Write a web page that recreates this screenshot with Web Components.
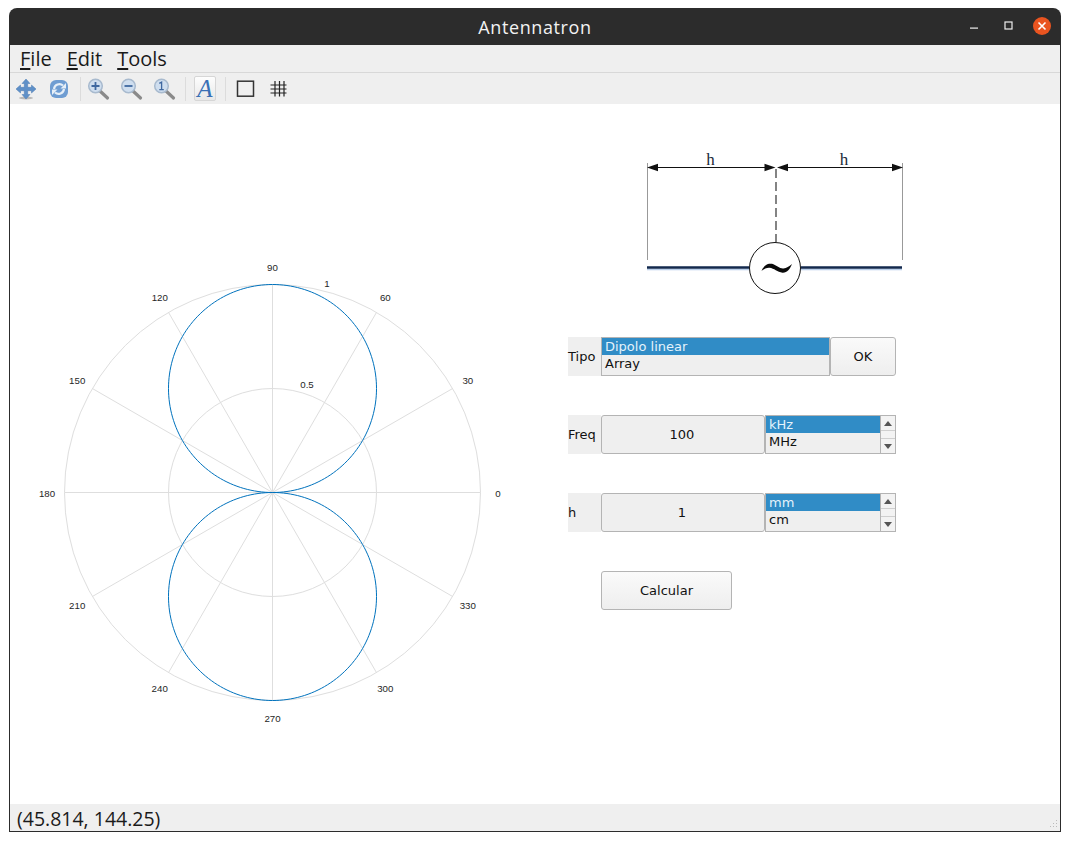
<!DOCTYPE html>
<html><head><meta charset="utf-8">
<style>
html,body{margin:0;background:#fff;height:100%}
body{padding:8px 9px 0 9px;box-sizing:border-box;overflow:hidden}
</style></head><body>
<app-window title-text="Antennatron">
  <menu-bar slot="menu"></menu-bar>
  <tool-bar slot="tools"></tool-bar>
  <polar-plot slot="plot"></polar-plot>
  <dipole-diagram slot="diagram"></dipole-diagram>
  <form-panel slot="form"></form-panel>
  <status-bar slot="status">(45.814, 144.25)</status-bar>
</app-window>
<script>
function def(name, html, setup){
  customElements.define(name, class extends HTMLElement{
    constructor(){super();const r=this.attachShadow({mode:'open'});r.innerHTML=typeof html==='function'?html(this):html;}
    connectedCallback(){ if(setup) setup(this); }
  });
}
def('app-window',`<style>
:host{display:flex;flex-direction:column;width:1052px;height:824px;box-sizing:border-box;background:#fff}
.title{height:37px;background:#2c2c2c;border-radius:8px 8px 0 0;display:flex;align-items:center;justify-content:center;color:#f2f2f2;font:18px "Open Sans",sans-serif;letter-spacing:.6px;position:relative;flex:none}
.ctl{position:absolute;right:0;top:0;height:37px;display:flex;align-items:center}
.frame{flex:1;display:flex;flex-direction:column;border:solid #2c2c2c;border-width:0 1px 1px 1px;min-height:0}
.main{flex:1;display:flex;min-height:0;background:#fff}
.right{display:flex;flex-direction:column}
</style>
<div class="title"><span id="t">Antennatron</span>
<div class="ctl"><svg width="100" height="37" viewBox="0 0 100 37">
<rect x="9" y="19.500" width="8" height="1.200" fill="#eee"/>
<rect x="44" y="14" width="7" height="7" fill="none" stroke="#eee" stroke-width="1.200"/>
<circle cx="81" cy="18" r="9" fill="#e95420"/>
<path d="M77.500 14.500l7 7M84.500 14.500l-7 7" stroke="#fff" stroke-width="1.600"/>
</svg></div></div>
<div class="frame">
<slot name="menu"></slot><slot name="tools"></slot>
<div class="main"><slot name="plot"></slot><div class="right"><slot name="diagram"></slot><slot name="form"></slot></div></div>
<slot name="status"></slot>
</div>`);

def('menu-bar',`<style>
:host{display:flex;height:28px;box-sizing:border-box;background:#efefef;border-bottom:1px solid #d8d8d8;padding-left:10px;font:20px "Open Sans",sans-serif;color:#1a1a1a;gap:15px;align-items:center;flex:none}
u{text-underline-offset:2px;text-decoration-thickness:1.5px}
</style><span><u>F</u>ile</span><span><u>E</u>dit</span><span><u>T</u>ools</span>`);

def('tool-bar',`<style>
:host{display:flex;height:31px;box-sizing:border-box;background:#efefef;align-items:center;padding-left:4px;flex:none}
svg{display:block;flex:none}
.b{width:24px;height:24px;display:flex;align-items:center;justify-content:center;margin-right:9px}
.s{width:1px;height:24px;background:#dcdcdc}
.a{width:22px;height:25px;box-sizing:border-box;background:linear-gradient(#fdfdfd,#e8e8e8);border:1px solid #d6d6d6;border-radius:2px;display:flex;align-items:center;justify-content:center;margin:0 9px 0 8px;font:italic 25px "Liberation Serif",serif;color:#3a70b5;line-height:1}
</style>
<div class="b"><svg width="22" height="22" viewBox="0 0 22 22"><ellipse cx="11" cy="20" rx="7" ry="1.500" fill="#777" opacity=".45"/><path d="M11 1l4 4.500h-2.300v3.800h3.800V7l4.500 4-4.500 4v-2.300h-3.800v3.800H15L11 21l-4-4.500h2.300v-3.800H5.500V15L1 11l4.500-4v2.300h3.800V5.500H7z" fill="#5f90c8" stroke="#4a7ab3" stroke-width=".5"/></svg></div>
<div class="b"><svg width="22" height="22" viewBox="0 0 22 22"><rect x="2" y="2" width="18" height="18" rx="6" fill="#6f9dd2"/><path d="M6 11a5.500 5.500 0 0 1 9-3.500" fill="none" stroke="#e6eff8" stroke-width="2.200"/><path d="M12.500 10.500h5.500V5z" fill="#e6eff8"/><path d="M16 11a5.500 5.500 0 0 1-9 3.500" fill="none" stroke="#e6eff8" stroke-width="2.200"/><path d="M9.500 11.500H4V17z" fill="#e6eff8"/></svg></div>
<div class="s" style="margin-right:6px"></div>
<div class="b"><svg width="24" height="24" viewBox="0 0 24 24"><path d="M13 14l7.500 7" stroke="#8a8a8a" stroke-width="3.200" stroke-linecap="round"/><circle cx="8.500" cy="9" r="6.800" fill="#cfdeef" stroke="#a8bace" stroke-width="1.500"/><path d="M4.500 9h8M8.500 5v8" stroke="#3f68a0" stroke-width="1.800"/></svg></div>
<div class="b"><svg width="24" height="24" viewBox="0 0 24 24"><path d="M13 14l7.500 7" stroke="#8a8a8a" stroke-width="3.200" stroke-linecap="round"/><circle cx="8.500" cy="9" r="6.800" fill="#cfdeef" stroke="#a8bace" stroke-width="1.500"/><path d="M4.500 9h8" stroke="#3f68a0" stroke-width="1.800"/></svg></div>
<div class="b"><svg width="24" height="24" viewBox="0 0 24 24"><path d="M13 14l7.500 7" stroke="#8a8a8a" stroke-width="3.200" stroke-linecap="round"/><circle cx="8.500" cy="9" r="6.800" fill="#cfdeef" stroke="#a8bace" stroke-width="1.500"/><path d="M6.300 6.300l2.300-1.200v7.400M6.300 12.700h4.500" stroke="#3f68a0" stroke-width="1.300" fill="none"/></svg></div>
<div class="s" style="margin-left:-1px"></div>
<div class="a">A</div>
<div class="s" style="margin-right:7px"></div>
<div class="b"><svg width="20" height="20" viewBox="0 0 20 20"><rect x="2.500" y="2.200" width="16" height="15" fill="none" stroke="#333" stroke-width="1.500"/></svg></div>
<div class="b"><svg width="18" height="18" viewBox="0 0 18 18"><path d="M6 1v15.500M10.500 1v15.500M15 1v15.500M1.500 5h16M1.500 9h16M1.500 13h16" stroke="#222" stroke-width="1.200"/></svg></div>
`);

def('polar-plot',()=>{
  const cx=262.5,cy=388.5,R=208,L=225.5;
  let g='',t='';
  for(const a of [0,30,60,90,120,150]){
    const r=a*Math.PI/180,dx=R*Math.cos(r),dy=R*Math.sin(r);
    g+=`<line x1="${cx-dx}" y1="${cy+dy}" x2="${cx+dx}" y2="${cy-dy}"/>`;
  }
  for(let a=0;a<360;a+=30){
    const r=a*Math.PI/180;
    const x=cx+L*Math.cos(r),y=cy-L*Math.sin(r)+4;
    t+=`<text x="${x.toFixed(1)}" y="${y.toFixed(1)}">${a}</text>`;
  }
  let p='';
  const N=360;
  for(let i=0;i<=N;i++){
    const th=i/N*2*Math.PI,rr=R*Math.abs(Math.sin(th));
    p+=(i?'L':'M')+(cx+rr*Math.cos(th)).toFixed(2)+' '+(cy-rr*Math.sin(th)).toFixed(2);
  }
  return `<style>:host{display:block;width:548px;height:700px;flex:none}svg{display:block}text{font:9.700px "Liberation Sans",sans-serif;fill:#262626;text-anchor:middle}</style>
  <svg width="548" height="700" viewBox="0 0 548 700"><g stroke="#dedede" stroke-width="1" fill="none">${g}<circle cx="${cx}" cy="${cy}" r="${R}"/><circle cx="${cx}" cy="${cy}" r="${R/2}"/></g>
  <path d="${p}" fill="none" stroke="#0072bd" stroke-width="1"/>
  ${t}<text x="${cx+34.5}" y="${cy-104.5}">0.5</text><text x="${cx+54.5}" y="${cy-205.5}">1</text></svg>`;
});

def('dipole-diagram',`<style>:host{display:block;height:233px;flex:none}svg{display:block}
text{font:17px "Liberation Serif",serif;text-anchor:middle;fill:#1a2a3a}</style>
<svg width="502" height="233" viewBox="0 0 502 233">
<g transform="translate(-558,-104)">
<text x="710.500" y="165">h</text><text x="844" y="165">h</text>
<path d="M647.500 163v97M902.500 163v97" stroke="#999" stroke-width="1" fill="none"/>
<path d="M650 167.500h123M780 167.500h120" stroke="#111" stroke-width="1"/>
<path d="M647 167.500l11-3.800v7.600zM775.500 167.500l-11-3.800v7.600zM777 167.500l11-3.800v7.600zM903 167.500l-11-3.800v7.600z" fill="#111"/>
<path d="M776 169v73" stroke="#333" stroke-width="1.200" stroke-dasharray="9 4" fill="none"/>
<path d="M647 269.500h102M801 269.500h101" stroke="#a8c4e6" stroke-width="1.500" opacity=".8"/>
<path d="M647 267.500h102M801 267.500h101" stroke="#12294d" stroke-width="2.600"/>
<circle cx="775" cy="268" r="25.500" fill="#fff" stroke="#111" stroke-width="1"/>
<path d="M761.500 271C764 265 768 263 772 263.800C776 264.800 780 269 783.500 268.500C786.500 268 789 266.500 792 264C790 269 787 273 782.500 272.700C777.500 272.300 774 268.200 769.500 267.800C766.500 267.600 764 269 761.500 271Z" fill="#0a0a0a"/>
</g></svg>`);

def('list-box',`<style>
:host{display:flex;box-sizing:border-box;border:1px solid #b4b4b4;background:#efefef;height:39px;font:13px "DejaVu Sans",sans-serif;color:#111;overflow:hidden}
.items{flex:1;display:flex;flex-direction:column;min-width:0}
.items div{height:17px;line-height:17px;padding-left:3px}
.sel{background:#308cc6;color:#e4f2fb}
.sb{display:none;width:14px;flex:none;border-left:1px solid #b4b4b4;flex-direction:column;background:#f3f3f3}
.sb i{display:flex;align-items:center;justify-content:center;height:14px;flex:none}
.sb b{flex:1;border:solid #cfcfcf;border-width:1px 0}
:host([scroll]) .sb{display:flex}
</style><div class="items"><div class="sel" id="a"></div><div id="b"></div></div>
<div class="sb"><i><svg width="8" height="5"><path d="M4 0l4 5H0z" fill="#555"/></svg></i><b></b><i><svg width="8" height="5"><path d="M0 0h8L4 5z" fill="#555"/></svg></i></div>`,
el=>{el.shadowRoot.getElementById('a').textContent=el.getAttribute('a');el.shadowRoot.getElementById('b').textContent=el.getAttribute('b');});

def('form-panel',`<style>
:host{display:grid;grid-template-columns:33px 164px 65px 66px;grid-auto-rows:39px;row-gap:39px;margin-left:10px;font:13px "DejaVu Sans",sans-serif;color:#111;width:328px}
.l{background:#efefef;display:flex;align-items:center}
.v{grid-column:2;box-sizing:border-box;background:#efefef;border:1px solid #b4b4b4;border-radius:3px;display:flex;align-items:center;justify-content:center;padding-right:2px}
.btn{box-sizing:border-box;background:linear-gradient(#fafafa,#eeeeee);border:1px solid #b4b4b4;border-radius:3px;display:flex;align-items:center;justify-content:center}
.wide{grid-column:2 / span 2}
.r{grid-column:3 / span 2}
.calc{grid-column:2;width:131px}
</style>
<div class="l">Tipo</div><list-box class="wide" a="Dipolo linear" b="Array"></list-box><div class="btn">OK</div>
<div class="l">Freq</div><div class="v">100</div><list-box class="r" scroll a="kHz" b="MHz"></list-box>
<div class="l">h</div><div class="v">1</div><list-box class="r" scroll a="mm" b="cm"></list-box>
<div class="btn calc">Calcular</div>`);

def('status-bar',`<style>
:host{display:flex;align-items:center;height:27px;box-sizing:border-box;background:#efefef;padding:1px 0 0 7px;font:19.5px "Open Sans",sans-serif;color:#1a1a1a;position:relative;flex:none}
svg{position:absolute;right:2px;bottom:2px}
</style><slot></slot><svg width="10" height="10" viewBox="0 0 10 10" fill="#bbb"><rect x="8" y="1" width="1" height="1"/><rect x="5" y="4" width="1" height="1"/><rect x="8" y="4" width="1" height="1"/><rect x="2" y="7" width="1" height="1"/><rect x="5" y="7" width="1" height="1"/><rect x="8" y="7" width="1" height="1"/></svg>`);
</script>
</body></html>
